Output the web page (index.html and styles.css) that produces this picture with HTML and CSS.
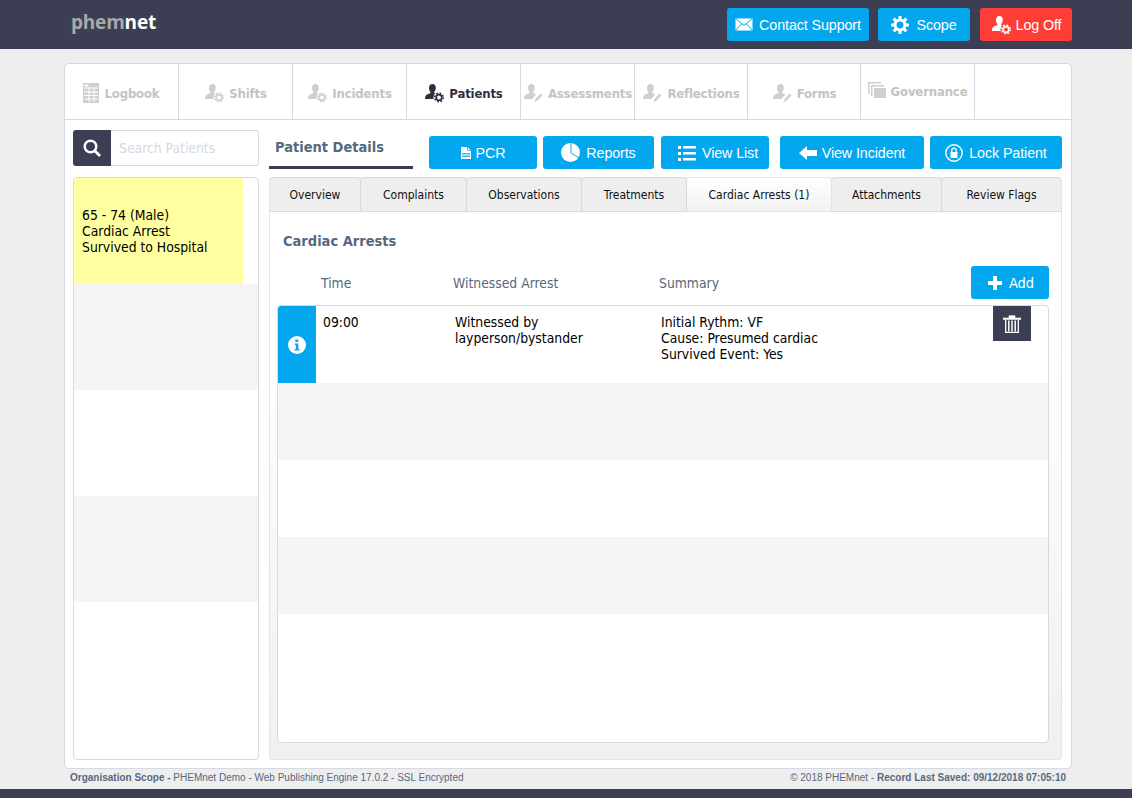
FILE: index.html
```html
<!DOCTYPE html>
<html lang="en">
<head>
<meta charset="utf-8">
<title>PHEMnet</title>
<link rel="stylesheet" href="styles.css">
</head>
<body>
<svg class="defs" width="0" height="0" aria-hidden="true">
  <symbol id="person" viewBox="0 0 20 20"><path d="M8.500 1c2 0 3.300 1.600 3.300 3.800 0 1.600-.6 3.100-1.400 4-.4.500-.3 1.200.3 1.500l2.300 1.200c1.500.8 2 2 2 4.500H1c0-2.500.6-3.700 2-4.500l3-1.200c.6-.3.700-1 .3-1.500C5.500 7.900 5 6.400 5 4.800 5 2.600 6.400 1 8.500 1z"/></symbol>
  <symbol id="person-gear" viewBox="0 0 20 20"><use href="#person"/><circle class="hole" cx="15" cy="14.500" r="5.500"/><circle cx="15" cy="14.500" r="2.800" fill="none" stroke="currentColor" stroke-width="1.700"/><circle cx="15" cy="14.500" r="4.300" fill="none" stroke="currentColor" stroke-width="1.500" stroke-dasharray="1.700 1.680"/></symbol>
  <symbol id="person-pen" viewBox="0 0 20 20"><use href="#person"/><path class="hole" d="M9 20l1-5 7-7 3 3-7 8z"/><path d="M11.500 19l1-3 5-5.500 2 2-5.500 5.500z"/></symbol>
  <symbol id="gear" viewBox="0 0 20 20"><circle cx="10" cy="10" r="5.500" fill="none" stroke="currentColor" stroke-width="3.400"/><path d="M10 0v20M0 10h20M2.900 2.900l14.200 14.200M17.100 2.900L2.900 17.100" stroke="currentColor" stroke-width="3.400" stroke-dasharray="4 12 4"/></symbol>
</svg>

<header class="topbar">
  <div class="logo"><span class="logo-dim">phem</span>net</div>
  <nav class="top-actions">
    <a class="btn btn-support"><svg class="ico ico-mail" viewBox="0 0 18 13"><rect x=".5" y=".5" width="17" height="12" fill="#fff"/><path d="M.5.500L9 7.500l8.500-7M.5 12.500l6-6.500M17.500 12.500l-6-6.500" fill="none" stroke="#03a7ee"/></svg>Contact Support</a>
    <a class="btn btn-scope"><svg class="ico ico-gear"><use href="#gear"/></svg>Scope</a>
    <a class="btn btn-logoff"><svg class="ico ico-person"><use href="#person-gear"/></svg>Log Off</a>
  </nav>
</header>

<main class="page">
  <section class="panel">
    <nav class="main-tabs">
      <a class="main-tab w114"><svg class="tab-ico" viewBox="0 0 16 20"><path d="M0 0h16v20H0z"/><path d="M1 5h14M1 9h14M1 12.500h14M1 16h14M6 5v14M11 5v14" stroke="#fff" fill="none"/><path d="M1.500 1.500h4v2h-4z" fill="#fff"/></svg>Logbook</a>
      <a class="main-tab w114"><svg class="tab-ico person"><use href="#person-gear"/></svg>Shifts</a>
      <a class="main-tab w114"><svg class="tab-ico person"><use href="#person-gear"/></svg>Incidents</a>
      <a class="main-tab w114 is-active"><svg class="tab-ico person"><use href="#person-gear"/></svg>Patients</a>
      <a class="main-tab w114"><svg class="tab-ico person"><use href="#person-pen"/></svg>Assessments</a>
      <a class="main-tab w113"><svg class="tab-ico person"><use href="#person-pen"/></svg>Reflections</a>
      <a class="main-tab w113"><svg class="tab-ico person"><use href="#person-pen"/></svg>Forms</a>
      <a class="main-tab w114 gov"><svg class="tab-ico stack" viewBox="0 0 18 16"><path d="M0 0h13v1.500H1.500V12H0z"/><path d="M3 3h13v1.500H4.500V14H3z"/><path d="M6 6h12v10H6z"/></svg>Governance</a>
      <span class="main-tab-rest"></span>
    </nav>

    <div class="workspace">
      <aside class="sidebar">
        <div class="search">
          <span class="search-btn"><svg viewBox="0 0 18 18" width="18" height="18"><circle cx="7.500" cy="7.500" r="5.800" fill="none" stroke="#fff" stroke-width="2.400"/><path d="M11.500 11.500L17 17" stroke="#fff" stroke-width="2.800"/></svg></span>
          <span class="search-field">Search Patients</span>
        </div>
        <div class="patient-list">
          <div class="patient-row"><div class="patient-card"><span>65 - 74 (Male)</span><span>Cardiac Arrest</span><span>Survived to Hospital</span></div></div>
          <div class="patient-row alt"></div>
          <div class="patient-row"></div>
          <div class="patient-row alt"></div>
        </div>
      </aside>

      <div class="content">
        <div class="content-head">
          <h1 class="details-title">Patient Details</h1>
          <div class="actions">
            <a class="btn act w108"><svg class="ico ico-pdf" viewBox="0 0 10 12"><path d="M0 0h6.500L10 3.500V12H0z" fill="#fff"/><path d="M6.500 0v3.500H10" fill="none" stroke="#03a7ee" stroke-width=".7"/><path d="M1 6.500h8M1 8h8M1 9.500h8" stroke="#03a7ee" stroke-width=".8"/></svg>PCR</a>
            <a class="btn act w111"><svg class="ico ico-pie" viewBox="0 0 20 20"><circle cx="10" cy="10" r="10" fill="#fff"/><path d="M10.500 0v10.500l8.500 5" stroke="#03a7ee" fill="none"/></svg>Reports</a>
            <a class="btn act w108 ml1 shift"><svg class="ico ico-list" viewBox="0 0 18 16"><path d="M0 1h3v3H0zM0 7h3v3H0zM0 13h3v3H0zM5 1h13v2.500H5zM5 7h13v2.500H5zM5 13h13v2.500H5z" fill="#fff"/></svg>View List</a>
            <a class="btn act w144 ml5"><svg class="ico ico-arrow" viewBox="0 0 18 14"><path d="M0 7l8-7v4h10v6H8v4z" fill="#fff"/></svg>View Incident</a>
            <a class="btn act w132"><svg class="ico ico-lock" viewBox="0 0 18 18"><circle cx="9" cy="9" r="8.200" fill="none" stroke="#fff" stroke-width="1.400"/><path d="M5.500 8h7v6h-7z" fill="#fff"/><path d="M6.800 8V6.300a2.200 2.200 0 0 1 4.400 0V8" fill="none" stroke="#fff" stroke-width="1.300"/></svg>Lock Patient</a>
          </div>
        </div>

        <div class="detail-box">
          <nav class="sub-tabs">
            <a class="sub-tab s92">Overview</a>
            <a class="sub-tab s106">Complaints</a>
            <a class="sub-tab s115">Observations</a>
            <a class="sub-tab s105">Treatments</a>
            <a class="sub-tab s145 is-active">Cardiac Arrests (1)</a>
            <a class="sub-tab s110">Attachments</a>
            <a class="sub-tab s120">Review Flags</a>
          </nav>
          <div class="detail-body">
            <h2 class="section-title">Cardiac Arrests</h2>
            <div class="table-head">
              <span class="col-time">Time</span>
              <span class="col-wit">Witnessed Arrest</span>
              <span class="col-sum">Summary</span>
              <a class="btn btn-add"><svg class="ico ico-plus" viewBox="0 0 14 14"><path d="M5 0h4v5h5v4H9v5H5V9H0V5h5z" fill="#fff"/></svg>Add</a>
            </div>
            <div class="table">
              <div class="row">
                <span class="row-info"><svg viewBox="0 0 18 18" width="18" height="18"><circle cx="9" cy="9" r="9" fill="#fff"/><path d="M7.300 3.500h3v2.500h-3zM6.800 7.500h3.500V13h1.200v1.500H6.700V13h1.100V9H6.800z" fill="#03a7ee"/></svg></span>
                <span class="cell-time">09:00</span>
                <span class="cell-wit">Witnessed by<br>layperson/bystander</span>
                <span class="cell-sum">Initial Rythm: VF<br>Cause: Presumed cardiac<br>Survived Event: Yes</span>
                <a class="row-delete"><svg viewBox="0 0 18 18" width="18" height="18"><path d="M0 3h18v1.400H0zM6 3V.7h6V3" fill="#fff" stroke="#fff" stroke-width=".6"/><path d="M2.700 5v12.400h12.600V5" fill="none" stroke="#fff" stroke-width="1.300"/><path d="M5.800 5.500v11M9 5.500v11M12.200 5.500v11" stroke="#fff" stroke-width="1.500"/></svg></a>
              </div>
              <div class="row alt"></div>
              <div class="row"></div>
              <div class="row alt"></div>
            </div>
          </div>
        </div>
      </div>
    </div>
  </section>
  <footer class="status">
    <span><b>Organisation Scope -</b> PHEMnet Demo - Web Publishing Engine 17.0.2 - SSL Encrypted</span>
    <span>© 2018 PHEMnet - <b>Record Last Saved: 09/12/2018 07:05:10</b></span>
  </footer>
</main>
<div class="bottombar"></div>
</body>
</html>
```
FILE: styles.css
```css
* { box-sizing: border-box; }
html, body { margin: 0; height: 100%; }
body {
  background: #eeeeee;
  font-family: "DejaVu Sans Condensed", "DejaVu Sans", sans-serif;
  font-stretch: condensed;
  font-size: 13px;
  color: #000;
  display: flex;
  flex-direction: column;
  height: 798px;
  overflow: hidden;
}
a { color: inherit; text-decoration: none; }
.defs { position: absolute; }
.hole { fill: var(--hole, #fff); }

.topbar {
  height: 49px;
  flex: none;
  background: #3c3f53;
  display: flex;
  justify-content: space-between;
  padding: 8px 60px 0 71px;
}
.logo {
  color: #fff;
  font-family: "Open Sans", sans-serif;
  font-stretch: normal;
  font-weight: 700;
  font-size: 19px;
  line-height: 29px;
  letter-spacing: -.2px;
}
.logo-dim { color: #a9a9ab; }
.top-actions { display: flex; gap: 9px; }
.top-actions .btn { height: 33px; }

.btn {
  display: flex;
  align-items: center;
  justify-content: center;
  background: #03a7ee;
  color: #fff;
  border-radius: 3px;
  font-family: "Liberation Sans", Arial, sans-serif;
  font-stretch: normal;
  font-size: 14.300px;
  letter-spacing: -.1px;
}
.btn-support { width: 142px; }
.btn-scope { width: 92px; margin-right: 1px; }
.btn-logoff { width: 92px; background: #fe3d37; --hole: #fe3d37; }
.shift { padding-left: 6px; }

.ico { flex: none; fill: currentColor; color: #fff; }
.ico-mail { width: 18px; height: 13px; margin-right: 6px; }
.ico-gear { width: 18px; height: 18px; margin-right: 7px; }
.ico-person { width: 20px; height: 20px; margin-right: 5px; }
.ico-pdf { width: 10px; height: 12px; margin-right: 5px; }
.ico-pie { width: 19px; height: 19px; margin-right: 6px; }
.ico-list { width: 18px; height: 16px; margin-right: 6px; }
.ico-arrow { width: 18px; height: 14px; margin-right: 5px; }
.ico-lock { width: 18px; height: 18px; margin-right: 6px; }
.ico-plus { width: 14px; height: 14px; margin-right: 7px; }

.page {
  flex: 1;
  padding: 14px 60px 0 64px;
  display: flex;
  flex-direction: column;
  min-height: 0;
}
.panel {
  height: 706px;
  flex: none;
  background: #fff;
  border: 1px solid #d6d9e3;
  border-radius: 5px;
  display: flex;
  flex-direction: column;
}
.main-tabs {
  height: 56px;
  flex: none;
  display: flex;
  border-bottom: 1px solid #d6d9e3;
}
.main-tab {
  display: flex;
  align-items: center;
  justify-content: center;
  gap: 5px;
  border-right: 1px solid #d6d9e3;
  color: #c3c3c3;
  font-size: 13px;
  font-weight: 700;
  letter-spacing: -.15px;
  white-space: nowrap;
  padding-top: 3px;
}
.main-tab.is-active { color: #2e3042; }
.w114 { width: 114px; }
.w113 { width: 113px; }
.main-tab-rest { flex: 1; }
.tab-ico { flex: none; width: 16px; height: 20px; fill: currentColor; color: #cfcfcf; }
.is-active .tab-ico { color: #2e3042; }
.tab-ico.person { width: 20px; height: 20px; }
.tab-ico.stack { width: 18px; height: 16px; margin-top: -4px; }
.gov { padding-top: 0; }

.workspace {
  flex: 1;
  display: flex;
  min-height: 0;
  padding: 10px 9px 8px 8px;
  gap: 10px;
}
.sidebar { width: 186px; flex: none; display: flex; flex-direction: column; gap: 11px; }
.search {
  height: 36px;
  flex: none;
  display: flex;
  border: 1px solid #d6d9e3;
  border-left: 0;
  border-radius: 3px;
}
.search-btn {
  width: 38px;
  background: #3c3f53;
  margin: -1px 0;
  border-radius: 3px 0 0 3px;
  display: flex;
  align-items: center;
  justify-content: center;
}
.search-field { padding-left: 8px; line-height: 35px; color: #d3d9e4; font-size: 13.800px; }
.patient-list {
  flex: 1;
  border: 1px solid #d6d9e3;
  border-radius: 4px;
  overflow: hidden;
}
.patient-row { height: 106px; }
.patient-row.alt { background: #f5f5f5; }
.patient-card {
  width: 169px;
  height: 100%;
  background: #ffff9f;
  padding: 29px 0 0 8px;
  display: flex;
  flex-direction: column;
  line-height: 16px;
  font-size: 13.800px;
}

.content { flex: 1; min-width: 0; display: flex; flex-direction: column; gap: 8px; }
.content-head { height: 39px; flex: none; display: flex; }
.details-title {
  width: 144px;
  margin: 0;
  height: 39px;
  padding: 5px 0 0 6px;
  border-bottom: 3px solid #3c3f53;
  font-size: 14.500px;
  font-weight: 700;
  line-height: 24px;
  color: #56687e;
}
.actions { margin-left: 16px; display: flex; gap: 6px; padding-top: 6px; }
.act { height: 33px; }
.w108 { width: 108px; }
.w111 { width: 111px; }
.w144 { width: 144px; }
.w132 { width: 132px; }
.ml1 { margin-left: 1px; }
.ml5 { margin-left: 5px; }

.detail-box {
  flex: 1;
  min-height: 0;
  background: #f0f0f0;
  border-radius: 4px;
  display: flex;
  flex-direction: column;
  border: 1px solid #e4e4e0;
  border-top: 0;
  overflow: hidden;
}
.sub-tabs { height: 35px; flex: none; display: flex; margin: 0 -1px; }
.sub-tab {
  display: flex;
  align-items: center;
  justify-content: center;
  background: #eeeeee;
  border: 1px solid #d6d9e3;
  border-left: 0;
  border-radius: 4px 4px 0 0;
  font-size: 12px;
  color: #111;
}
.sub-tab:first-child { border-left: 1px solid #d6d9e3; }
.sub-tab.is-active { background: linear-gradient(#fff, #f2f2f2); border-color: #e4e4dc; }
.s92 { width: 92px; }
.s106 { width: 106px; }
.s115 { width: 115px; }
.s105 { width: 105px; }
.s145 { width: 145px; }
.s110 { width: 110px; }
.s120 { flex: 1; }

.detail-body {
  flex: 1;
  min-height: 0;
  background: linear-gradient(#fff 20%, #f0f0f0 100%);
  padding: 0 12px 0 7px;
  display: flex;
  flex-direction: column;
}
.section-title {
  margin: 18px 0 0 6px;
  font-size: 14.500px;
  font-weight: 700;
  line-height: 22px;
  color: #56687e;
  height: 22px;
}
.table-head {
  height: 33px;
  margin-top: 14px;
  flex: none;
  display: flex;
  align-items: center;
  color: #56687e;
  font-size: 13.800px;
}
.col-time { width: 132px; margin-left: 44px; }
.col-wit { width: 206px; }
.col-sum { flex: 1; }
.btn-add { width: 78px; height: 33px; padding-left: 2px; font-family: inherit; font-stretch: condensed; font-size: 14.500px; }
.table {
  margin-top: 6px;
  height: 438px;
  flex: none;
  border: 1px solid #d6d9e3;
  border-radius: 4px;
  overflow: hidden;
  background: #fff;
}
.row { height: 77px; display: flex; font-size: 13.800px; line-height: 16px; }
.row.alt { background: #f5f5f5; }
.row-info {
  width: 38px;
  background: #03a7ee;
  display: flex;
  align-items: center;
  justify-content: center;
  flex: none;
}
.cell-time, .cell-wit, .cell-sum { padding-top: 8px; }
.cell-time { width: 139px; padding-left: 7px; }
.cell-wit { width: 206px; }
.cell-sum { width: 332px; }
.row-delete {
  width: 38px;
  height: 35px;
  background: #3c3f53;
  display: flex;
  align-items: center;
  justify-content: center;
  flex: none;
}

.status {
  display: flex;
  justify-content: space-between;
  padding: 3px 6px 0 6px;
  font-family: "Liberation Sans", Arial, sans-serif;
  font-stretch: normal;
  font-size: 10px;
  line-height: 12px;
  color: #56687e;
}
.bottombar { height: 9px; flex: none; background: #3c3f53; }
```
